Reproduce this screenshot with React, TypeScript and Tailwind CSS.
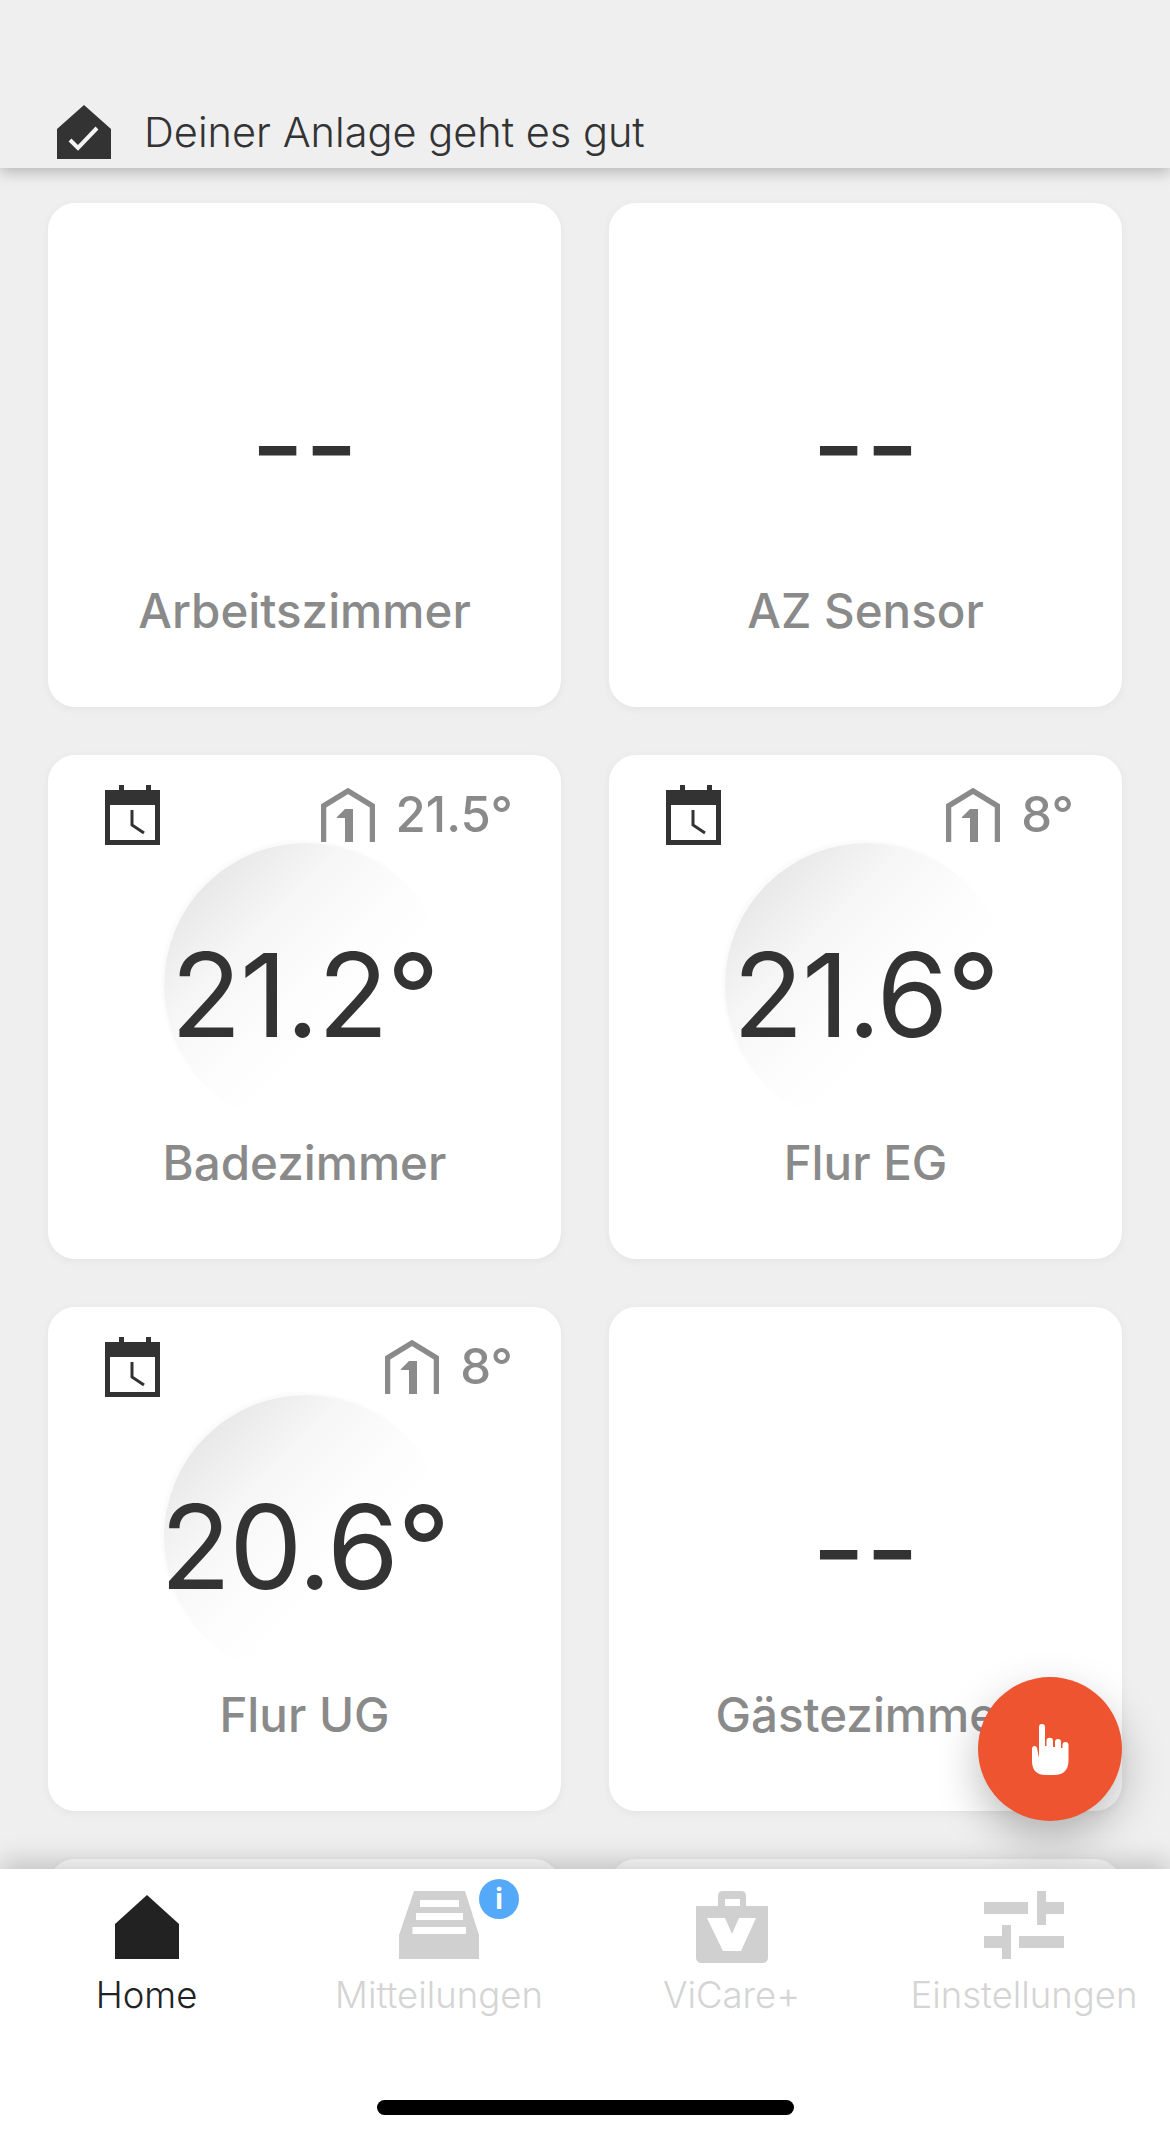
import React from "react";

function HouseCheck() {
  return (
    <svg viewBox="0 0 54 54" className="w-[54px] h-[54px] shrink-0">
      <path d="M27 0 L54 24 V54 H0 V24 Z" fill="#333333" />
      <path d="M13 35 L21 43 L40 23" fill="none" stroke="#f4f4f4" strokeWidth="4" />
    </svg>
  );
}

function CalendarClock() {
  return (
    <svg viewBox="0 0 55 60" className="w-[55px] h-[60px]">
      <path d="M14 0 H19 V5 H41 V0 H46 V5 H55 V60 H0 V5 H14 Z" fill="#333333" />
      <rect x="5" y="20" width="45" height="35" fill="#ffffff" />
      <path d="M27 25 V40 L39 48" fill="none" stroke="#333333" strokeWidth="3" />
    </svg>
  );
}

function FloorHouse() {
  return (
    <svg viewBox="0 0 54 54" className="w-[54px] h-[54px] shrink-0">
      <path d="M2.5 54 V18 L27 3 L51.5 18 V54" fill="none" stroke="#8a8a8a" strokeWidth="5.5" />
      <path d="M16 29 L24 21 H32 V54 H24 V30 H16 Z" fill="#8a8a8a" />
    </svg>
  );
}

function HomeIcon() {
  return (
    <svg viewBox="0 0 64 64" className="w-[64px] h-[64px]">
      <path d="M32 0 L64 29 V64 H0 V29 Z" fill="#222222" />
    </svg>
  );
}

function InboxIcon() {
  return (
    <svg viewBox="0 0 80 68" className="w-[80px] h-[68px]">
      <path d="M15 0 H66 L80 44 V68 H0 V44 Z" fill="#d0d0d0" />
      <rect x="21" y="9" width="39" height="7" fill="#ffffff" />
      <rect x="17" y="22" width="47" height="7" fill="#ffffff" />
      <rect x="13.5" y="36" width="53.5" height="7" fill="#ffffff" />
    </svg>
  );
}

function BagIcon() {
  return (
    <svg viewBox="0 0 72 72" className="w-[72px] h-[72px] translate-y-[4px]">
      <path
        d="M22 15 V5 Q22 0 27 0 H45 Q50 0 50 5 V15 H72 V66 Q72 72 66 72 H6 Q0 72 0 66 V15 Z M29 8 V15 H44 V8 Z"
        fill="#d0d0d0"
        fillRule="evenodd"
      />
      <path d="M11 27 H29 L36 43 L43 27 H60 L45 60 H27 Z" fill="#ffffff" />
    </svg>
  );
}

function SlidersIcon() {
  return (
    <svg viewBox="0 0 80 68" className="w-[80px] h-[68px]" fill="#d0d0d0">
      <rect x="0" y="11" width="44" height="12" />
      <rect x="53" y="0" width="9" height="34" />
      <rect x="62" y="11" width="18" height="12" />
      <rect x="0" y="45" width="18" height="12" />
      <rect x="18" y="34" width="9" height="34" />
      <rect x="35" y="45" width="45" height="12" />
    </svg>
  );
}

function HandIcon() {
  return (
    <svg viewBox="0 0 37 51" className="w-[37px] h-[51px]">
      <path
        d="M7 3 A3 3 0 0 1 13 3 V22 H14.5 V17 A3 3 0 0 1 21 17 V23 H23 V18 A3 3 0 0 1 29 18 V24 H30.5 V21 A3 3 0 0 1 36.5 21 V36 Q36.5 51 22 51 H14 Q0 51 0 37 V24 A2.6 2.6 0 0 1 5 24 L7 34 Z"
        fill="#ffffff"
      />
    </svg>
  );
}

interface Room {
  id: string;
  name?: string;
  temp?: string;
  target?: string;
}

// the last two cards only peek out above the tab bar
const ROOMS: Room[] = [
  { id: "a", name: "Arbeitszimmer" },
  { id: "b", name: "AZ Sensor" },
  { id: "c", name: "Badezimmer", temp: "21.2°", target: "21.5°" },
  { id: "d", name: "Flur EG", temp: "21.6°", target: "8°" },
  { id: "e", name: "Flur UG", temp: "20.6°", target: "8°" },
  { id: "f", name: "Gästezimmer" },
  { id: "g" },
  { id: "h" },
];

function RoomCard({ room }: { room: Room }) {
  return (
    <div className="relative h-[504px] rounded-[27px] bg-white shadow-[0_2px_10px_rgba(0,0,0,0.05)] overflow-hidden">
      {room.temp && (
        <>
          <div className="absolute left-[116px] top-[88px] w-[284px] h-[284px] rounded-full bg-[linear-gradient(135deg,#e8e8e8_14%,#f6f6f6_32%,#fdfdfd_52%,#ffffff_65%)] shadow-[-3px_-3px_3px_rgba(0,0,0,0.02)]" />
          <div className="relative flex items-start justify-between pl-[57px] pr-[48px] pt-[30px] h-[92px]">
            <CalendarClock />
            <div className="flex items-center gap-[21px] pt-[3px]">
              <FloorHouse />
              <span className="text-[49px] leading-[54px] font-medium text-[#8a8a8a]">{room.target}</span>
            </div>
          </div>
          <div className="relative text-center text-[116px] leading-[120px] font-normal text-[#333333] tracking-[-1.5px] mt-[88px]">
            {room.temp}
          </div>
        </>
      )}
      {room.name && !room.temp && (
        <div className="relative text-center text-[117px] leading-[120px] font-normal text-[#333333] pt-[182px]">--</div>
      )}
      {room.name && (
        <div className="absolute inset-x-0 top-[378px] text-center text-[47.5px] leading-[60px] font-medium text-[#8a8a8a]">
          {room.name}
        </div>
      )}
    </div>
  );
}

function NavItem({ icon, label, active }: { icon: React.ReactNode; label: string; active?: boolean }) {
  return (
    <div className="flex-1 flex flex-col items-center">
      <div className="h-[84px] flex items-end justify-center">{icon}</div>
      <span className={active ? "mt-[14px] text-[36.5px] leading-[44px] font-light text-[#222222]" : "mt-[14px] text-[36.5px] leading-[44px] font-light text-[#d4d4d4]"}>
        {label}
      </span>
    </div>
  );
}

export default function App() {
  return (
    <div className="relative w-[1170px] h-[2139px] overflow-hidden flex flex-col bg-[#efefef] font-['Inter',sans-serif]">
      <header className="relative z-10 h-[168px] shrink-0 bg-[#efefef] shadow-[0_4px_14px_rgba(0,0,0,0.25)] flex items-end pl-[57px] pb-[11px] gap-[33px]">
        <div className="-mb-[2px]"><HouseCheck /></div>
        <span className="text-[41.5px] leading-[50px] font-[350] text-[#333333] whitespace-nowrap">Deiner Anlage geht es gut</span>
      </header>

      <main className="flex-1 overflow-hidden px-[48px] pt-[35px] grid grid-cols-2 gap-x-[48px] gap-y-[48px] content-start">
        {ROOMS.map((room) => (
          <RoomCard key={room.id} room={room} />
        ))}
      </main>

      <nav className="relative z-10 h-[270px] shrink-0 bg-white shadow-[0_-8px_24px_rgba(0,0,0,0.18)] flex pt-[6px]">
        <div className="w-[293px] flex"><NavItem icon={<HomeIcon />} label="Home" active /></div>
        <div className="w-[292px] flex relative">
          <NavItem icon={<InboxIcon />} label="Mitteilungen" />
          <div className="absolute left-[186px] top-[4px] w-[40px] h-[40px] rounded-full bg-[#54a9f9] flex items-center justify-center text-white text-[28px] font-bold leading-none">i</div>
        </div>
        <div className="w-[293px] flex"><NavItem icon={<BagIcon />} label="ViCare+" /></div>
        <div className="w-[292px] flex"><NavItem icon={<SlidersIcon />} label="Einstellungen" /></div>
        <div className="absolute left-[377px] top-[231px] w-[417px] h-[15px] rounded-full bg-black" />
      </nav>

      <button className="absolute z-[5] left-[978px] top-[1677px] w-[144px] h-[144px] rounded-full bg-[#ee5430] flex items-center justify-center shadow-[0_18px_44px_rgba(0,0,0,0.26)]">
        <HandIcon />
      </button>
    </div>
  );
}
